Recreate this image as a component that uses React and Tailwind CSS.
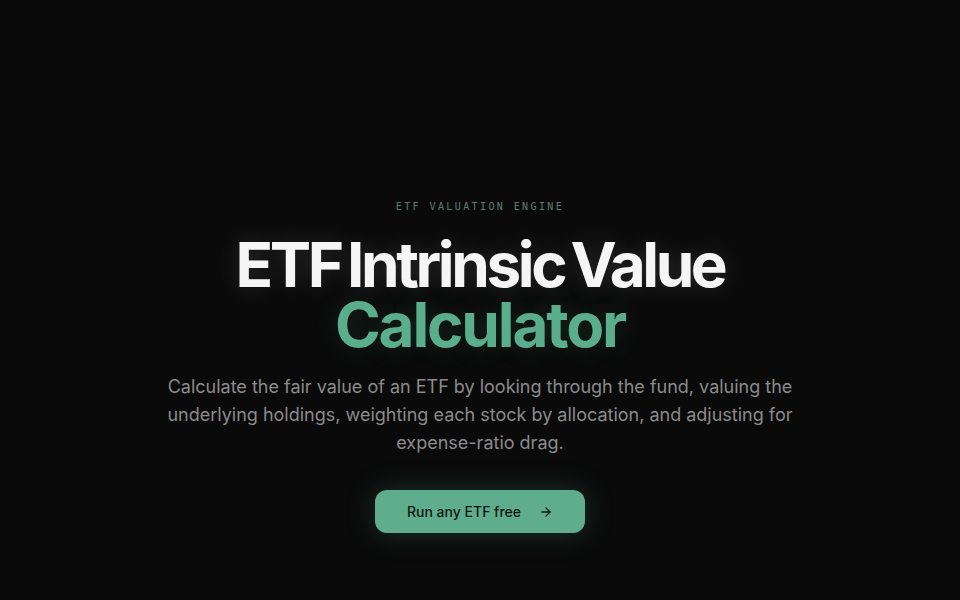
import React from "react";

export default function App() {
  return (
    <div className="min-h-[600px] w-full bg-[#0a0a0a] flex flex-col items-center pt-[199px]" style={{ fontFamily: "Inter, 'Noto Sans', sans-serif" }}>
      <div
        className="text-[10px] leading-[15px] tracking-[0.24em] text-[#5f7d71] uppercase"
        style={{ fontFamily: "'DejaVu Sans Mono', 'Liberation Mono', monospace" }}
      >
        ETF Valuation Engine
      </div>
      <h1 className="mt-[21px] text-center text-[62px] leading-[60px] font-bold">
        <span className="block tracking-[-0.055em] [word-spacing:-5px] text-[#f5f5f5] [text-shadow:0_0_24px_rgba(255,255,255,0.15)]">ETF Intrinsic Value</span>
        <span className="block tracking-[-0.035em] text-[#5bae8d] [text-shadow:0_0_24px_rgba(91,174,141,0.2)]">Calculator</span>
      </h1>
      <p className="mt-[18px] max-w-[640px] text-center text-[18px] leading-[28px] text-[#8b8b8b]">
        Calculate the fair value of an ETF by looking through the fund, valuing the underlying holdings, weighting each stock by allocation, and adjusting for expense-ratio drag.
      </p>
      <button className="mt-[33px] h-[43px] w-[210px] rounded-xl bg-[#5fad8d] flex items-center justify-center gap-[18px] text-[14px] font-medium text-[#0d1712] shadow-[0_0_28px_rgba(95,173,141,0.25)]">
        <span>Run any ETF free</span>
        <svg width="14" height="14" viewBox="0 0 24 24" fill="none" stroke="currentColor" strokeWidth="2.2" strokeLinecap="round" strokeLinejoin="round">
          <path d="M5 12h14" />
          <path d="M12 5l7 7-7 7" />
        </svg>
      </button>
    </div>
  );
}
